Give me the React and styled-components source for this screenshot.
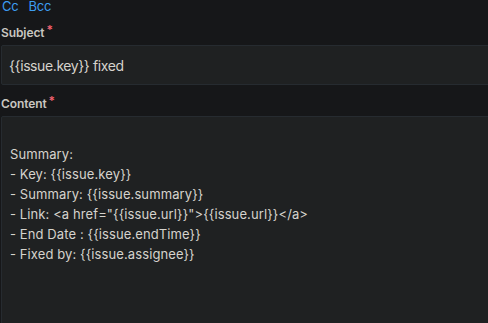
import React from 'react';
import styled, { createGlobalStyle } from 'styled-components';

const contentText = `
Summary:
- Key: {{issue.key}}
- Summary: {{issue.summary}}
- Link: <a href="{{issue.url}}">{{issue.url}}</a>
- End Date : {{issue.endTime}}
- Fixed by: {{issue.assignee}}`;

const App = () => {
    return (
        <Wrapper>
            <GlobalStyle />
            <LinkRow>
                <LinkButton>Cc</LinkButton>
                <LinkButton>Bcc</LinkButton>
            </LinkRow>
            <Field>
                <Label>Subject<Required>*</Required></Label>
                <Input defaultValue="{{issue.key}} fixed" />
            </Field>
            <Field>
                <Label>Content<Required>*</Required></Label>
                <TextArea defaultValue={contentText} />
            </Field>
        </Wrapper>
    )
}

export default App;

const GlobalStyle = createGlobalStyle`
    html, body {
        margin: 0;
        padding: 0;
        background: #161719;
        overflow: hidden;
    }
`
const Wrapper = styled.div`
    width: 492px;
    height: 323px;
    padding-left: 1px;
    display: flex;
    flex-direction: column;
    font-family: Inter, "Noto Sans", sans-serif;
    background: #161719;
    overflow: hidden;
`
const LinkRow = styled.div`
    display: flex;
    gap: 10px;
    height: 21px;
    margin-top: -2px;
    padding-left: 1px;
    align-items: center;
`
const LinkButton = styled.span`
    color: #3d9df2;
    font-size: 13px;
    letter-spacing: -0.2px;
    cursor: pointer;
`
const Field = styled.div`
    display: flex;
    flex-direction: column;
    margin-top: 10px;
`
const Label = styled.label`
    display: flex;
    align-items: center;
    gap: 2px;
    height: 16px;
    margin-bottom: 5px;
    color: #c9c6c0;
    font-size: 12px;
    font-weight: 600;
    letter-spacing: -0.1px;
`
const Required = styled.span`
    color: #f0616f;
    font-size: 12px;
    margin-top: -5px;
`
const Input = styled.input`
    box-sizing: border-box;
    width: 100%;
    height: 40px;
    padding: 0 7px;
    background: #1f2122;
    border: 1px solid #262b30;
    border-radius: 2px;
    color: #d6d3cd;
    font-family: Inter, "Noto Sans", sans-serif;
    font-size: 14px;
    letter-spacing: -0.4px;
    outline: none;
`
const TextArea = styled.textarea`
    box-sizing: border-box;
    width: 100%;
    height: 212px;
    padding: 7px 8px;
    background: #1f2122;
    border: 1px solid #262b30;
    border-radius: 2px;
    color: #d6d3cd;
    font-family: Inter, "Noto Sans", sans-serif;
    font-size: 13px;
    letter-spacing: 0.1px;
    line-height: 20px;
    resize: none;
    outline: none;
`
